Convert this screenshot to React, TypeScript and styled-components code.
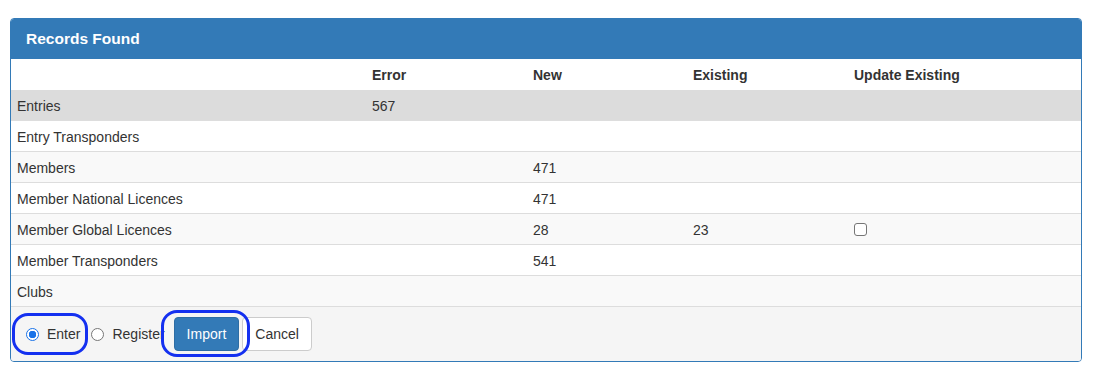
import React, { useState } from 'react';
import styled, { createGlobalStyle } from 'styled-components';

const GlobalStyle = createGlobalStyle`
	body {
		margin: 0;
		background: #fff;
		font-family: "Liberation Sans", Arial, sans-serif;
		font-size: 14px;
		color: #333;
	}
`;

const Page = styled.div`
	padding: 18px 15px 0 10px;
`;

const Panel = styled.div`
	border: 1px solid #337ab7;
	border-radius: 4px;
	overflow: hidden;
	background: #fff;
`;

const PanelHeading = styled.div`
	background: #337ab7;
	color: #fff;
	height: 40px;
	display: flex;
	align-items: center;
	padding: 0 15px;
	font-size: 15.5px;
	font-weight: bold;
`;

const Table = styled.table`
	width: 100%;
	border-collapse: collapse;
	table-layout: fixed;
`;

const HeadCell = styled.th<{ $width?: number }>`
	text-align: left;
	font-weight: bold;
	height: 31px;
	padding: 0 6px;
	width: ${p => (p.$width ? `${p.$width}px` : 'auto')};
`;

const Row = styled.tr<{ $tone: 'hover' | 'stripe' | 'plain' }>`
	background: ${p => (p.$tone === 'hover' ? '#dcdcdc' : p.$tone === 'stripe' ? '#f9f9f9' : '#fff')};
	border-top: 1px solid #ddd;
	&:first-child {
		border-top: none;
	}
`;

const Cell = styled.td`
	height: 28px;
	padding: 2px 6px 0;
	vertical-align: middle;
`;

const Check = styled.span`
	display: inline-block;
	width: 11px;
	height: 11px;
	border: 1px solid #767676;
	border-radius: 3px;
	background: #fff;
	vertical-align: middle;
	margin-top: -4px;
`;

const Footer = styled.div`
	position: relative;
	background: #f5f5f5;
	border-top: 1px solid #ddd;
	height: 54px;
	display: flex;
	align-items: center;
	padding-left: 15px;
`;

const RadioLabel = styled.label<{ $gapAfter: number }>`
	display: flex;
	align-items: center;
	gap: 8px;
	margin-right: ${p => p.$gapAfter}px;
`;

const RadioDot = styled.span<{ $checked: boolean }>`
	width: 11px;
	height: 11px;
	border-radius: 50%;
	border: 1px solid ${p => (p.$checked ? '#1a73e8' : '#767676')};
	background: ${p => (p.$checked ? 'radial-gradient(circle, #1a73e8 0 3.5px, #fff 4px)' : '#fff')};
`;

const Button = styled.button<{ $primary?: boolean }>`
	font-family: inherit;
	font-size: 14px;
	height: 34px;
	padding: 0 12px;
	border-radius: 4px;
	border: 1px solid ${p => (p.$primary ? '#2e6da4' : '#ccc')};
	background: ${p => (p.$primary ? '#337ab7' : '#fff')};
	color: ${p => (p.$primary ? '#fff' : '#333')};
	margin-left: 3px;
`;

const Highlight = styled.div<{ $left: number; $top: number; $w: number; $h: number }>`
	position: absolute;
	left: ${p => p.$left}px;
	top: ${p => p.$top}px;
	width: ${p => p.$w}px;
	height: ${p => p.$h}px;
	border: 3px solid #1430f0;
	border-radius: 16px;
	box-sizing: border-box;
	pointer-events: none;
`;

const rows = [
	{ name: 'Entries', error: '567', newCount: '', existing: '', update: false },
	{ name: 'Entry Transponders', error: '', newCount: '', existing: '', update: false },
	{ name: 'Members', error: '', newCount: '471', existing: '', update: false },
	{ name: 'Member National Licences', error: '', newCount: '471', existing: '', update: false },
	{ name: 'Member Global Licences', error: '', newCount: '28', existing: '23', update: true },
	{ name: 'Member Transponders', error: '', newCount: '541', existing: '', update: false },
	{ name: 'Clubs', error: '', newCount: '', existing: '', update: false },
];

export default function App() {
	const [mode, setMode] = useState<'enter' | 'register'>('enter');

	return (
		<Page>
			<GlobalStyle />
			<Panel>
				<PanelHeading>Records Found</PanelHeading>
				<Table>
					<thead>
						<tr>
							<HeadCell $width={343}></HeadCell>
							<HeadCell $width={149}>Error</HeadCell>
							<HeadCell $width={148}>New</HeadCell>
							<HeadCell $width={149}>Existing</HeadCell>
							<HeadCell>Update Existing</HeadCell>
						</tr>
					</thead>
					<tbody>
						{rows.map((r, i) => (
							<Row key={r.name} $tone={i === 0 ? 'hover' : i % 2 === 0 ? 'stripe' : 'plain'}>
								<Cell>{r.name}</Cell>
								<Cell>{r.error}</Cell>
								<Cell>{r.newCount}</Cell>
								<Cell>{r.existing}</Cell>
								<Cell>{r.update && <Check />}</Cell>
							</Row>
						))}
					</tbody>
				</Table>
				<Footer>
					<RadioLabel $gapAfter={11} onClick={() => setMode('enter')}>
						<RadioDot $checked={mode === 'enter'} />
						Enter
					</RadioLabel>
					<RadioLabel $gapAfter={6} onClick={() => setMode('register')}>
						<RadioDot $checked={mode === 'register'} />
						Register
					</RadioLabel>
					<Button $primary>Import</Button>
					<Button>Cancel</Button>
					<Highlight $left={1} $top={6} $w={76} $h={42} />
					<Highlight $left={150} $top={3} $w={89} $h={47} />
				</Footer>
			</Panel>
		</Page>
	);
}
